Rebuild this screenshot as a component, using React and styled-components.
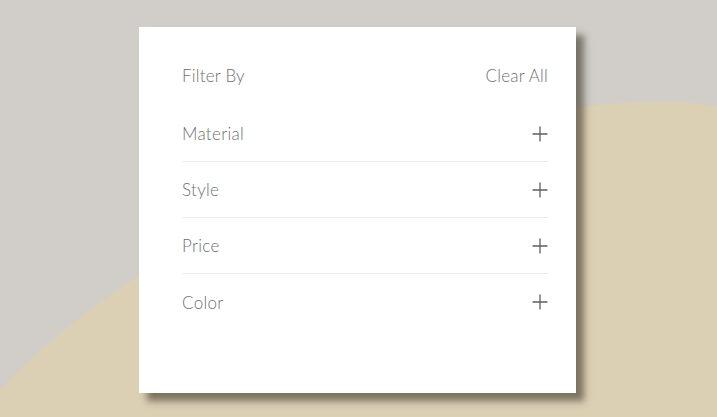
import React from 'react'
import styled, { createGlobalStyle } from 'styled-components'

const GlobalStyle = createGlobalStyle`
  html, body {
    margin: 0;
    padding: 0;
  }
  body {
    font-family: Lato, "Open Sans", sans-serif;
    background: #d1cec9;
  }
`

const Page = styled.div`
  position: relative;
  width: 717px;
  height: 417px;
  overflow: hidden;
  display: flex;
  justify-content: flex-start;
  align-items: flex-start;
  padding: 27px 0 0 139px;
  box-sizing: border-box;
`

const Backdrop = styled.svg`
  position: absolute;
  top: 0;
  left: 0;
  z-index: 0;
`

const Card = styled.div`
  position: relative;
  z-index: 1;
  width: 437px;
  height: 366px;
  background: #ffffff;
  box-shadow: 8px 8px 7px rgba(45, 40, 28, 0.55);
  padding: 20px 28px 0 43px;
  box-sizing: border-box;
  display: flex;
  flex-direction: column;
`

const Header = styled.div`
  height: 56px;
  display: flex;
  align-items: center;
  justify-content: space-between;
  margin-bottom: 3px;
`

const HeaderText = styled.span`
  font-size: 17px;
  font-weight: 300;
  color: #707070;
  letter-spacing: 0.2px;
  cursor: ${props => (props.link ? 'pointer' : 'default')};
`

const Row = styled.div`
  height: 56px;
  box-sizing: border-box;
  display: flex;
  align-items: center;
  justify-content: space-between;
  border-bottom: ${props => (props.last ? 'none' : '1px solid #ecebe8')};
`

const Label = styled.span`
  font-size: 17px;
  font-weight: 300;
  color: #707070;
  letter-spacing: 0.3px;
`

const PlusButton = styled.button`
  border: none;
  background: none;
  padding: 0;
  margin: 0;
  width: 16px;
  height: 16px;
  display: flex;
  cursor: pointer;
`

const Plus = () => (
  <svg width="16" height="16" viewBox="0 0 16 16">
    <path d="M8 0.5V15.5M0.5 8H15.5" stroke="#5f5f5f" strokeWidth="1.3" fill="none" />
  </svg>
)

const filters = ['Material', 'Style', 'Price', 'Color']

const App = () => (
  <>
    <GlobalStyle />
    <Page>
      <Backdrop width="717" height="417" viewBox="0 0 717 417">
        <rect width="717" height="417" fill="#d1cec9" />
        <path
          d="M0 390 C 110 270 390 100 663 102 C 690 102 705 104 717 107 L717 417 L0 417 Z"
          fill="#dbcfb4"
        />
      </Backdrop>
      <Card>
        <Header>
          <HeaderText>Filter By</HeaderText>
          <HeaderText link>Clear All</HeaderText>
        </Header>
        {filters.map((name, i) => (
          <Row key={name} last={i === filters.length - 1}>
            <Label>{name}</Label>
            <PlusButton aria-label={`Expand ${name}`}>
              <Plus />
            </PlusButton>
          </Row>
        ))}
      </Card>
    </Page>
  </>
)

export default App
